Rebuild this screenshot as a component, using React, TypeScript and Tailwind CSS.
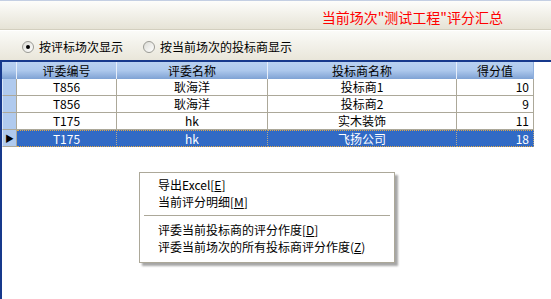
const rows = [
  { id: "T856", name: "耿海洋", vendor: "投标商1", score: 10 },
  { id: "T856", name: "耿海洋", vendor: "投标商2", score: 9 },
  { id: "T175", name: "hk", vendor: "实木装饰", score: 11 },
  { id: "T175", name: "hk", vendor: "飞扬公司", score: 18 },
];

const SELECTED = 3;

function Radio({ checked, label }: { checked?: boolean; label: string }) {
  return (
    <div className="flex items-center gap-[5px]">
      <span className="flex h-[12px] w-[12px] items-center justify-center rounded-full border border-[#9a9a94] bg-gradient-to-br from-[#dcdcd6] to-white">
        {checked && <span className="h-[4px] w-[4px] rounded-full bg-black" />}
      </span>
      <span>{label}</span>
    </div>
  );
}

function MenuItem({ text, hot, open = "[", close = "]" }: { text: string; hot: string; open?: string; close?: string }) {
  return (
    <div className="flex h-[17px] items-center pl-[18px]">
      {text}
      {open}
      <span className="underline">{hot}</span>
      {close}
    </div>
  );
}

export default function App() {
  return (
    <div className="relative h-[299px] w-[551px] overflow-hidden bg-white font-['Noto_Sans_CJK_SC',sans-serif] text-[12px] leading-none text-black">
      <div className="h-[1px] bg-[#c4cfe3]" />
      <div className="flex h-[28px] items-center justify-end bg-gradient-to-b from-[#fdfdfb] to-[#e6e3d6] pr-[48px] pt-[3px]">
        <span className="text-[14px] text-[#ff0000]">当前场次"测试工程"评分汇总</span>
      </div>
      <div className="h-[1px] bg-[#d3cfbf]" />
      <div className="h-[1px] bg-white" />
      <div className="flex h-[29px] items-center gap-[20px] bg-gradient-to-b from-[#fbfbf8] to-[#e9e6da] pl-[22px] pt-[3px]">
        <Radio checked label="按评标场次显示" />
        <Radio label="按当前场次的投标商显示" />
      </div>

      <div className="h-[239px] border-l-2 border-t-2 border-[#17398c]">
        <div className="flex h-[17px] w-[532px] bg-gradient-to-b from-[#b9d1f1] via-[#adc8ec] to-[#7fa2d4]">
          <div className="w-[15px] border-r border-[#e6eefa]" />
          <div className="flex w-[100px] items-center justify-center border-r border-[#e6eefa]">评委编号</div>
          <div className="flex w-[151px] items-center justify-center border-r border-[#e6eefa]">评委名称</div>
          <div className="flex w-[189px] items-center justify-center border-r border-[#e6eefa]">投标商名称</div>
          <div className="flex w-[77px] items-center justify-center border-r border-[#8fb0de]">得分值</div>
        </div>
        {rows.map((r, i) => {
          const sel = i === SELECTED;
          const cell = sel
            ? "flex items-center border-y border-r border-dotted border-y-[#e2a845] border-r-[#b8a987] bg-[#316ac5] text-white"
            : "flex items-center border-b border-r border-[#aca899] bg-white";
          return (
            <div key={i} className="flex h-[17px] w-[532px]">
              <div className="flex w-[15px] items-center justify-center border-b border-r border-[#aca899] border-l border-l-[#dbe7f8] bg-[#b0caee]">
                {sel && <span className="text-[9px] text-black">▶</span>}
              </div>
              <div className={`${cell} w-[100px] justify-center`}>{r.id}</div>
              <div className={`${cell} w-[151px] justify-center`}>{r.name}</div>
              <div className={`${cell} w-[189px] justify-center`}>{r.vendor}</div>
              <div className={`${cell} w-[77px] justify-end pr-[4px]`}>{r.score}</div>
            </div>
          );
        })}
      </div>

      <div className="absolute left-[139px] top-[172px] flex h-[91px] w-[256px] flex-col border border-[#aca899] bg-white pt-[3px] shadow-[3px_3px_2px_rgba(0,0,0,0.35)]">
        <MenuItem text="导出Excel" hot="E" />
        <MenuItem text="当前评分明细" hot="M" />
        <div className="mx-[4px] mb-[5px] mt-[5px] h-[1px] bg-[#aca899]" />
        <MenuItem text="评委当前投标商的评分作度" hot="D" />
        <MenuItem text="评委当前场次的所有投标商评分作度" hot="Z" open="(" close=")" />
      </div>
    </div>
  );
}
